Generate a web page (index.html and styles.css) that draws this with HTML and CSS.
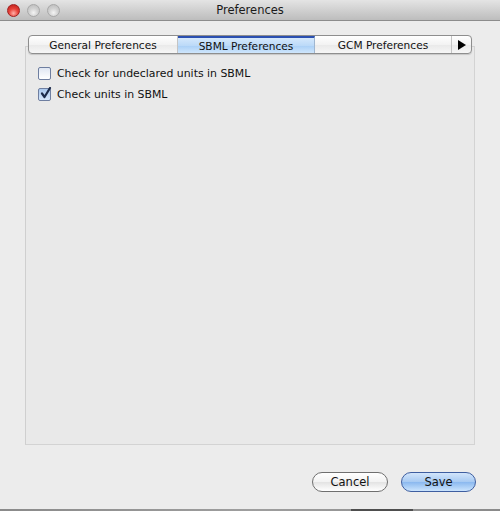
FILE: index.html
```html
<!DOCTYPE html>
<html>
<head>
<meta charset="utf-8">
<link rel="stylesheet" href="styles.css">
</head>
<body>
<div class="window">
  <div class="titlebar">
    <div class="lights">
      <span class="light close"></span>
      <span class="light"></span>
      <span class="light"></span>
    </div>
    <div class="title">Preferences</div>
  </div>
  <div class="content">
    <div class="tabbox">
      <div class="tabs">
        <div class="tab t1">General Preferences</div>
        <div class="tab t2 selected">SBML Preferences</div>
        <div class="tab t3">GCM Preferences</div>
        <div class="tab arrow"><svg width="9" height="10" viewBox="0 0 9 10"><path d="M1 0 L9 5 L1 10 Z" fill="#000"/></svg></div>
      </div>
      <div class="panel">
        <label class="row"><span class="cb"></span><span>Check for undeclared units in SBML</span></label>
        <label class="row"><span class="cb checked"><svg width="13" height="13" viewBox="0 0 13 13"><path d="M3 6.5 L5.5 10 L11 1" fill="none" stroke="#1b2a4a" stroke-width="2.2" stroke-linecap="round" stroke-linejoin="round"/></svg></span><span>Check units in SBML</span></label>
      </div>
    </div>
    <div class="footer">
      <button class="btn">Cancel</button>
      <button class="btn default">Save</button>
    </div>
  </div>
  <div class="bottombar"><span class="dock"></span></div>
</div>
</body>
</html>
```

FILE: styles.css
```css
html, body {
  margin: 0;
  padding: 0;
}
body {
  width: 500px;
  height: 511px;
  overflow: hidden;
  font-family: "DejaVu Sans", "Liberation Sans", sans-serif;
  background: #ececec;
}
.window {
  display: flex;
  flex-direction: column;
  height: 511px;
}
.titlebar {
  height: 20px;
  flex: none;
  display: flex;
  align-items: center;
  position: relative;
  background: linear-gradient(#e4e4e4, #bdbdbd);
  border-bottom: 1px solid #8c8c8c;
}
.lights {
  display: flex;
  gap: 7px;
  padding-left: 7px;
}
.light {
  width: 13px;
  height: 13px;
  border-radius: 50%;
  box-sizing: border-box;
  border: 1px solid #a8a8a8;
  background: radial-gradient(circle at 50% 70%, #f4f4f4 0, #d2d2d2 45%, #b8b8b8 100%);
}
.light.close {
  border-color: #a02020;
  background: radial-gradient(circle at 50% 75%, #ffb0a8 0, #e8433a 45%, #b81b16 100%);
}
.title {
  position: absolute;
  left: 0;
  right: 0;
  text-align: center;
  font-size: 11.5px;
  color: #1a1a1a;
  pointer-events: none;
}
.content {
  flex: 1;
  display: flex;
  flex-direction: column;
  padding: 14px 25px 0 25px;
}
.tabbox {
  display: flex;
  flex-direction: column;
}
.tabs {
  display: flex;
  margin: 0 3px -8px 3px;
  height: 17px;
  position: relative;
  z-index: 1;
  border: 1px solid #8e8e8e;
  border-radius: 4px;
  overflow: hidden;
  background: linear-gradient(#ffffff, #f3f3f3 50%, #e9e9e9 51%, #f6f6f6);
  box-shadow: 0 1px 1px rgba(0,0,0,0.15);
}
.tab {
  display: flex;
  align-items: center;
  justify-content: center;
  font-size: 10.6px;
  color: #111;
  border-right: 1px solid #c4c4c4;
  box-sizing: border-box;
}
.t1 { width: 149px; }
.t2 { width: 137px; }
.t3 { width: 137px; }
.arrow { flex: 1; border-right: none; }
.tab.selected {
  background: linear-gradient(#d5e8fc, #bcdaf8 50%, #a9cff6 51%, #cfe6fc);
  border-top: 2px solid #2a4fb0;
  border-right-color: #9fb6d0;
}
.panel {
  height: 399px;
  box-sizing: border-box;
  border: 1px solid #d3d3d3;
  border-left-color: #cfcfcf;
  background: #e9e9e9;
  padding: 20px 12px 0 12px;
  display: flex;
  flex-direction: column;
  gap: 8px;
}
.row {
  display: flex;
  align-items: center;
  gap: 6px;
  font-size: 10.9px;
  color: #111;
  height: 13px;
}
.cb {
  width: 13px;
  height: 13px;
  box-sizing: border-box;
  border: 1px solid #6e7ea0;
  border-radius: 2px;
  background: linear-gradient(#dfe6f2, #ffffff);
  display: flex;
  position: relative;
}
.cb.checked {
  background: linear-gradient(#aac8ee, #d6e6fa);
}
.cb svg {
  position: absolute;
  left: 0;
  top: -2px;
}
.footer {
  display: flex;
  justify-content: flex-end;
  gap: 13px;
  padding: 27px 0 0 0;
  margin-right: -1px;
}
.btn {
  width: 76px;
  height: 20px;
  border-radius: 10px;
  border: 1px solid #6f6f6f;
  font-family: "DejaVu Sans", sans-serif;
  font-size: 11.5px;
  color: #111;
  padding: 0;
  background: linear-gradient(#ffffff, #f2f2f2 50%, #e3e3e3 51%, #ffffff);
}
.btn.default {
  width: 75px;
  border-color: #3e5ea0;
  background: linear-gradient(#d2e5fb, #a6c9f2 50%, #8ab8ef 51%, #cbe4fd);
}
.bottombar {
  height: 2px;
  flex: none;
  background: linear-gradient(90deg, #8a8a8a, #9e9e9e 50%, #8a8a8a);
  position: relative;
}
.dock {
  position: absolute;
  left: 351px;
  width: 62px;
  top: 0;
  height: 2px;
  background: #4e4e4e;
}
```
